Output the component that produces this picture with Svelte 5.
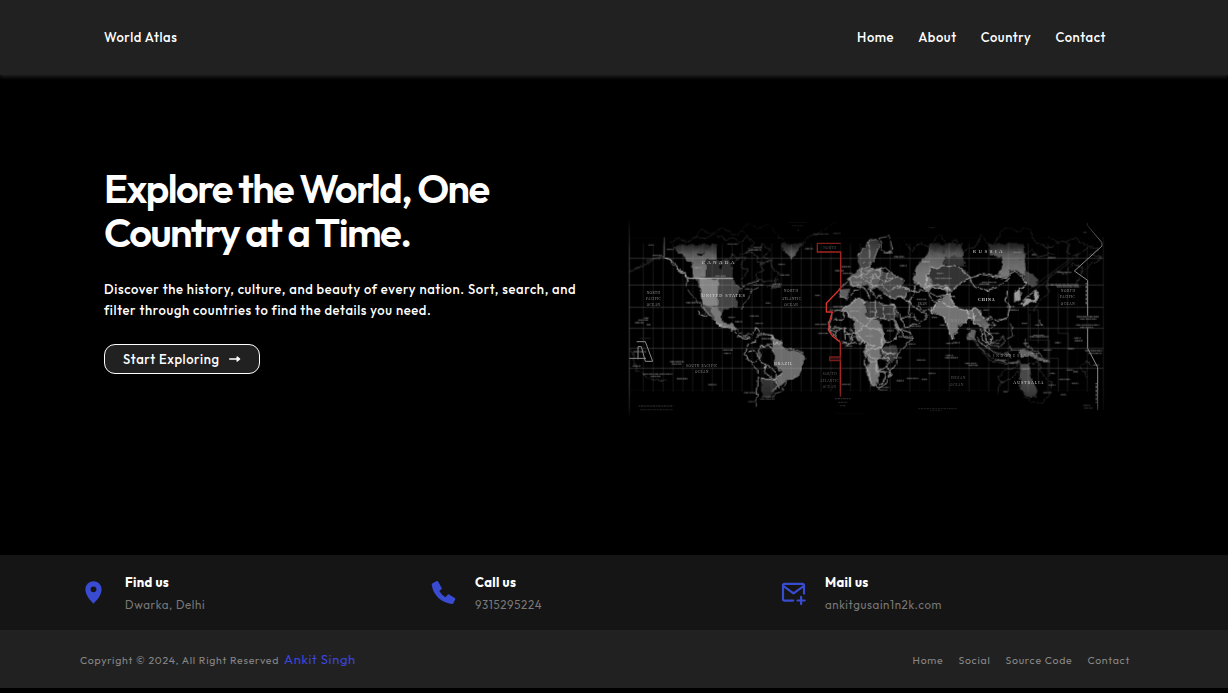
<script>
  const navLinks = ['Home', 'About', 'Country', 'Contact'];
  const footerLinks = ['Home', 'Social', 'Source Code', 'Contact'];
  const contacts = [
    { icon: 'pin', title: 'Find us', text: 'Dwarka, Delhi' },
    { icon: 'phone', title: 'Call us', text: '9315295224' },
    { icon: 'mail', title: 'Mail us', text: 'ankitgusain1n2k.com' }
  ];

  const meridians = Array.from({ length: 46 }, (_, i) => 70 + i * 29.6);
  const parallels = [85, 145, 225, 292, 355, 415, 475, 540];

  // Small place markers: x, y, width
  const marks = [
    [85,105,18],[98,136,26],[140,118,22],[222,173,22],[285,198,32],[322,102,34],[385,120,38],[400,112,24],
    [555,116,24],[580,72,45],[640,70,22],[475,163,20],[480,195,28],[458,222,26],[455,230,26],[400,225,30],
    [375,237,22],[437,279,14],[198,278,28],[45,338,26],[55,330,30],[80,344,12],[72,324,14],[40,425,38],
    [150,455,42],[155,462,30],[38,468,24],[68,492,90],[92,499,30],[170,506,34],[265,524,24],[310,420,28],
    [312,430,20],[372,548,40],[385,575,22],[425,560,36],[420,567,44],[665,400,30],[675,408,22],[665,523,26],
    [645,182,26],[665,170,26],[668,190,28],[585,343,36],[595,370,30],[628,300,32],[640,290,40],[325,322,20],
    [345,335,22],[350,380,38],[390,318,26],[405,340,24],[410,374,36],[425,386,34],[440,402,28],[585,256,16],
    [822,140,30],[840,167,20],[790,128,28],[798,205,24],[910,155,14],[866,243,24],[890,268,30],[862,322,26],
    [870,348,32],[750,305,22],[798,312,24],[800,362,22],[835,380,28],[865,402,22],[935,322,18],[960,345,22],
    [978,400,22],[999,398,20],[975,443,38],[978,436,22],[890,450,26],[925,490,22],[860,505,36],[905,508,18],
    [830,512,22],[785,430,30],[820,443,24],[780,485,24],[775,532,34],[778,540,24],[1035,460,36],[1045,466,28],
    [1040,357,12],[1040,388,26],[1085,217,44],[1078,222,30],[1100,345,30],[1105,370,32],[1110,400,28],
    [1135,328,20],[1160,290,24],[1165,300,20],[1205,340,18],[1245,345,24],[1230,380,56],[1240,376,34],
    [1305,398,18],[1345,416,18],[1210,400,14],[1285,143,22],[1312,187,42],[1290,225,86],[1310,230,70],
    [1370,320,66],[1380,327,50],[1368,345,70],[1380,352,40],[1362,384,20],[1364,392,24],[1395,422,52],
    [1405,430,40],[1290,490,16],[1286,525,20],[1318,508,34],[1322,554,18],[1340,480,20],[1355,520,20],
    [1360,485,14],[1390,586,22],[1392,594,26],[1270,548,24],[1150,545,14],[1180,127,24],[1235,134,12],
    [1390,67,10],[1420,465,18],[1175,420,34],[1230,430,30],[1270,420,24],[1270,455,20],[1175,300,22],
    [1090,300,18],[1052,330,30],[1170,460,24],[1125,450,36],[950,190,20],[945,205,50],[905,155,24],[690,303,26],
    [720,348,22],[735,378,24],[735,405,20],[700,380,22],[735,182,24],[765,180,24],[700,217,26],[1207,477,22]
  ];
</script>

<div class="page">
  <header>
    <span class="brand">World Atlas</span>
    <nav>
      {#each navLinks as link}<a href="#top">{link}</a>{/each}
    </nav>
  </header>

  <main>
    <section class="intro">
      <h1>Explore the World, One<br />Country at a Time.</h1>
      <p>Discover the history, culture, and beauty of every nation. Sort, search, and<br />filter through countries to find the details you need.</p>
      <button>
        <span>Start Exploring</span>
        <svg width="12" height="8" viewBox="0 0 12 8"><path d="M.7 4H10M8.2 2 10.6 4 8.2 6Z" fill="#fff" stroke="#fff" stroke-width="1.4" stroke-linejoin="round" stroke-linecap="round" /></svg>
      </button>
    </section>

    <svg class="map" width="490" height="210" viewBox="0 0 1470 630" role="img" aria-label="World map">
      <defs>
        <linearGradient id="fade" x1="0" y1="0" x2="0" y2="1">
          <stop offset=".03" stop-color="#000" /><stop offset=".12" stop-color="#999" />
          <stop offset=".2" stop-color="#fff" /><stop offset=".82" stop-color="#fff" />
          <stop offset=".94" stop-color="#888" /><stop offset=".99" stop-color="#000" />
        </linearGradient>
        <linearGradient id="land" gradientUnits="userSpaceOnUse" x1="0" y1="100" x2="0" y2="190">
          <stop offset="0" stop-color="#222" /><stop offset=".4" stop-color="#5c5c5c" /><stop offset="1" stop-color="#777" />
        </linearGradient>
        <filter id="rough" filterUnits="userSpaceOnUse" x="0" y="0" width="1470" height="630" color-interpolation-filters="sRGB">
          <feTurbulence type="fractalNoise" baseFrequency=".055" numOctaves="2" seed="4" />
          <feDisplacementMap in="SourceGraphic" scale="16" xChannelSelector="R" yChannelSelector="G" />
        </filter>
        <mask id="edges" maskUnits="userSpaceOnUse" x="0" y="0" width="1470" height="630"><rect width="1470" height="630" fill="url(#fade)" /></mask>
      </defs>
      <g mask="url(#edges)" fill="none" stroke-linejoin="round">
        <g filter="url(#rough)">
        <!-- Americas -->
        <path fill="url(#land)" d="M163 112 178 103H290V150H258V205H220L216 160 185 140Z" />
        <path fill="#303030" d="M258 150H322L340 170V205H258Z" />
        <path fill="#444" d="M225 205H340L347 222 362 236 350 262 356 290 335 296 310 300 300 315 300 334 338 342 350 362 312 350 290 340 272 318 245 285 240 240Z" />
        <path fill="#858585" d="M237 207H295L292 285 270 289 245 283Z" />
        <path fill="#777" d="M270 290 295 292 305 318 302 335 338 344 358 364 310 352 285 338Z" />
        <path fill="#6c6c6c" d="M460 390 485 395 495 415 525 425 550 434 554 448 542 475 530 500 500 512 480 530 465 505 485 490 462 460Z" />
        <path fill="#343434" d="M424 508 455 505 474 530 460 550 440 562 424 550Z" />
        <path fill="url(#land)" d="M480 100 550 100 535 120 515 147 500 130Z" />
        <g fill="#000" stroke="none"><ellipse cx="326" cy="316" rx="20" ry="21" /><path d="M230 134l24-9-8 13zM298 170l14-8-6 20z" /></g>

        <!-- Europe, Africa and Asia -->
        <path fill="#484848" d="M712 140 730 115 747 93 766 88 775 112 764 145 740 172 724 176Z" />
        <path fill="#606060" d="M682 205 722 174 770 174 792 186 780 212 770 232 755 240 740 222 718 230 690 225ZM658 238 690 236 682 266 658 262Z" />
        <path fill="#484848" d="M792 186 820 192 850 205 840 230 862 240 864 260 825 268 790 253 770 232 780 212Z" />
        <path fill="#747474" d="M664 298 715 264 736 270 738 320 782 333 784 360 800 395 782 415 786 440 770 455 778 480 770 530 752 528 740 490 746 455 732 422 740 400 712 390 700 365 705 335Z" />
        <path fill="#393939" d="M738 275 825 286 836 325 790 328 738 322ZM785 415 830 405 830 435 816 460 790 450Z" />
        <path fill="url(#land)" d="M890 170 925 125 930 102H1028V140H972V168L1000 170 1045 200 1020 225 990 242 940 235 922 244 876 210Z" />
        <path fill="#333" d="M972 140 1028 138 1036 170 1000 168 972 165Z" />
        <path fill="url(#land)" d="M1105 102H1210L1218 185 1216 208 1198 186 1170 180 1160 202 1130 198 1140 182 1150 165 1145 140 1110 136Z" />
        <path fill="#333" d="M935 175 970 168 1035 178 1048 205 1008 236 945 231 922 195Z" />
        <path fill="#737373" d="M935 305 960 272 985 252 998 270 1010 292 1048 300 1078 296 1074 326 1048 330 1015 348 996 382 974 320Z" />
        <path fill="#626262" d="M1060 300 1080 296 1085 320 1108 344 1100 360 1062 338Z" />
        <path fill="#999" d="M1184 248 1200 235 1202 270 1186 278ZM1206 282 1220 264 1240 268 1248 242 1256 244 1252 274 1228 282 1210 290Z" />
        <path fill="#444" d="M1210 180 1240 195 1256 210 1240 232 1215 225Z" />
        <path fill="#626262" d="M1198 420 1235 420 1252 438 1285 450 1270 455 1230 440 1202 444ZM1052 358 1066 360 1060 390 1038 382Z" />
        <path fill="#484848" d="M1200 462H1228L1234 500 1252 545 1246 562 1224 560 1200 542Z" />
        <path fill="#000" d="M765 242 790 255 780 262 770 258Z" />

        <!-- Faint coastlines -->
        <g stroke="#353535" stroke-width="2.6">
          <path d="M30 186 60 168 90 150 130 136M45 178l20-5 35-24 26-8M150 100l22-14 30 8 26-14 30 6 28-12 30 14 26-5 18 15 20-16 24 20-20 13 34 5 5-20 25 18-18 23 25 10-35 10 12 20-25 10 5 18 32 8 26-10 14 20-32 8M220 85l25-25 32 10 30-15 35 20 25-10 30 25M360 60l25-20 28 16 34-15 25 35 25 18 20 22 24-10 25-25 35-14 20-14 30-20M315 180l20-45 40 10-15 25 25 8-22 35 12 25M340 160l35-35 40 10-5 25 40-5 10 22 22 15-20 10 5 18-26 12" />
          <path d="M850 92l25 30 25-25 28 14 32-38 20 30-12 25 40-40 20 35 40-14 14-34 30 34 14-12 26-44 44 10 30-10 24 50 45 10 24-22 30 12-10 24 34 10 35-28 30 5-25 20 34 8-40 22-25 28-15 30 22-50-32-10-20 30-35-8-24 30 10 30-32 34-15 24M1285 80l35 20 45-15 30 20M1200 150l35-35 20 25 45-10M1145 520l-8-20 20-20 30-8 15-15M1228 465l25-10 14 40 28 25-8 35-22 25-30-5-24-18" />
          <path d="M1400 500l-20-30 20-18 20 20M1195 480l-20 24-35 14-4 32M1040 372l38 42 30 36 50 12M34 420 52 480 90 505 150 515" />
        </g>

        <!-- Country borders -->
        <g stroke="#aaa" stroke-width="2.6">
          <path stroke="#bbb" d="M135 142 150 148 165 160 172 175 190 188 204 206M132 140 150 153 170 176 192 194 206 212M232 302l12 15 15 5M248 288l40 52 48 20 20 20 32 6" />
          <path stroke="#777" d="M204 206 198 225 208 247 224 265 246 288 262 320M345 222l20 15 20-16 32-8M365 302l2-20 15-16 10-22 24-12M358 365l18 12 20-5" />
          <path stroke="#bbb" d="M398 372 410 352 422 370 452 372 462 392M424 508l40 0 10 18-20 18M386 400 376 430 386 450 410 475 414 520 408 596M386 400l22-4 8-24M386 425l20-4 12 22-14 16-20-6M418 410l32-4 12 18M418 410l2 42 14 8 4 34 26 12 2-24-44-28M465 505l20-13M480 530l-20-20M455 375l5 28 20-6" />
          <path stroke="#888" d="M462 392 480 394 492 410 550 430 554 446 532 498 502 510 486 545 466 550 460 562" />
          <path d="M712 138 730 115 747 93 768 88 778 110 764 145 742 172 724 174 722 195 690 205 682 216 658 236 660 264 684 266 700 248 722 230 738 240 748 256M720 195l22-2 10-18 22 6 22-8 22 20 34 18-14 22-36 8-16-18-25 5-25-18zM747 92l2 45-20 20M778 85l30-6 10 41-18 10-14-10z" />
          <path d="M688 205 700 230 722 225 742 238 758 232M718 180 745 208 768 192 790 218 820 202M756 188v34l22 10M782 174l-5 26-25 8M802 188l-7 35M790 252 825 264 860 258 866 238 844 230M748 238l22 24 6-10 12 12M735 242l18 26M820 236l18-12 30 12" />
          <path stroke="#b5b5b5" d="M738 275 712 266 664 298 640 310 628 340 628 360 645 382 664 394 698 402 730 396 745 420 732 450 745 480 754 522 776 534 800 520 808 490 830 460 832 430 878 384 850 382 838 358 824 326 824 286 738 275M664 298l72 50 30-28V270M736 348l-24 20-34 5-12-20h-30M736 348l50 15M738 325h52V288M790 328l30 0 16 30-8 28-28 12-14-32M790 370l-6 42-30 5M712 368l20 30 30 8M745 420l36-6 10-26M745 435l25 15 36-8M781 414l25 20 22-4M745 455h25v30h25l-4 30-15 10M770 450l-4 40M806 440l-8 30-26 15M798 470l18 14-8 18M786 445l18-15 20 4M645 382l10-25 18-4 3 38M676 354l18 42M692 354l3 42M650 365l-20-5M640 330h30V306M838 358l36 10 5 18" />
          <path d="M825 286 842 325 855 350 890 342 918 330 916 310 890 300 870 275 840 262M842 325l35-15 14 24M870 275l-5 35M840 262l30 13 10-30 40-5 15 30 18 8-18 25-30-5-12-15M880 245l-24-10-25-8M880 245l15-27 28 26 28 16 32-8-3-24-38-6-30 10" />
          <path stroke="#c5c5c5" d="M922 195 935 175 968 170 1004 168 1028 180 1048 205 1020 222 1005 236 990 246 992 265 1008 292 1044 300 1070 296 1084 318 1098 328 1110 322 1135 334 1162 322 1170 290 1158 270 1162 245M1048 205l40-12 72 12 12-20 20 3 28 30-5 12-22 5M1048 205l12 22 40 14 35-10 35-28M922 195l-6 32 32 7 44 2M935 305l18-32 30-22 22 12M953 273l42 18 15 1M974 320l-40-12 0-17M974 320l22 66 20-34 38-30M1044 300l4 26 22-6M1060 300l0 36 20 10 5 40 20 10-12-38 22 22-3 20-18 10-22-20M1184 240v40M1202 282l20-24 25-15" />
        </g>
        <g stroke="#7a7a7a" stroke-width="2.4"><path d="M1080 370l18-20 12 8-8 18zM1092 336l18-12 15 22-10 10M1110 365l-22-25M1070 380l25 30 36 20 36 6M1098 395l38-4 12-12 8 14-20 18-30-2M1165 402l10 15-14 12 16 16M1050 375l28 34 34 32 50 18 40-4M1220 386l-5 20M1260 330l8 22M1171 340l10 38-20 8M1215 406l35 18 35 30-34-4" /></g>
        </g>

        <!-- Graticule -->
        <path stroke="#c4c4c4" stroke-width="3" d="M205 205H340" /><path stroke="#686868" stroke-width="3" d="M133 82V142" />
        <g stroke="#bbb" stroke-width="2.4">
          {#each meridians as x, i}<path opacity={i < 23 ? 0.17 : i % 2 ? 0.2 : 0.05} d="M{x} 100V545" />{/each}
          {#each parallels as y}<path opacity={y < 100 || y > 500 ? 0.05 : 0.32} d="M28 {y}H1450" />{/each}
          <path opacity=".4" d="M28 30V615" /><path opacity=".2" d="M1450 80V600" />
        </g>
        <path stroke="#303030" stroke-width="2" d="M60 385h32M70 355v44M1285 355v90h30v100M1315 250v120h30v50M1230 310v80h58v110M1225 300h30v100M1180 415h75v100M1225 240 1360 140M1232 250 1375 135" />
        <g stroke="#aaa" stroke-width="4" stroke-dasharray="4 1 6 1 3 2" opacity=".55">
          {#each marks as [x, y, w]}<path d="M{x} {y}h{w}" />{/each}
        </g>

        <!-- Date lines -->
        <path stroke="#8a8a8a" stroke-width="3" d="M1402 38V46L1446 98V108L1363 183 1403 211V317M1403 355V415L1433 472V600M28 445H78M50 395H76L98 454H76L64 410H54V448" />
        <g stroke="#777" stroke-width="7" stroke-dasharray="2 2"><path d="M1400 220v65M1430 520v58" /><path d="M1285 224h92" opacity=".5" /></g>
        <path stroke="#d8322a" stroke-width="4" d="M662 235 619 280V306H637L627 340V363L638 379 661 397" />
        <path stroke="#a32620" stroke-width="4" d="M662 100H592V126H662V235M661 397V560" />
        <path stroke="#771c19" stroke-width="4" fill="#32100f" d="M629 441H661V452H629Z" />

        <g class="labels" stroke="none">
          <g fill="#d8d8d8">
            <text x="245" y="162" textLength="98" font-size="15">CANADA</text>
            <text x="245" y="261" textLength="130" font-size="13">UNITED STATES</text>
            <text x="462" y="466" textLength="55" font-size="13">BRAZIL</text>
            <text x="1058" y="129" textLength="90" font-size="15">RUSSIA</text>
            <text x="1074" y="274" textLength="50" font-size="12" font-weight="bold">CHINA</text>
            <text x="1180" y="523" textLength="90" font-size="12">AUSTRALIA</text>
            <text x="1120" y="440" textLength="98" font-size="11" opacity=".6">INDONESIA</text>
          </g>
          <g fill="#999" font-size="10">
            <text x="80" y="251" textLength="40">NORTH</text><text x="78" y="270" textLength="44">PACIFIC</text><text x="80" y="288" textLength="40">OCEAN</text>
            <text x="492" y="247" textLength="42">NORTH</text><text x="485" y="269" textLength="58">ATLANTIC</text><text x="493" y="288" textLength="40">OCEAN</text>
            <text x="198" y="470" textLength="94">SOUTH PACIFIC</text><text x="225" y="488" textLength="40">OCEAN</text>
            <text x="1323" y="247" textLength="42">NORTH</text><text x="1320" y="265" textLength="44">PACIFIC</text><text x="1322" y="285" textLength="42">OCEAN</text>
            <text x="985" y="335" textLength="44">INDIA</text><text x="895" y="284" textLength="25">IRAN</text>
          </g>
          <g fill="#666" font-size="10">
            <text x="608" y="494" textLength="42">SOUTH</text><text x="600" y="515" textLength="56">ATLANTIC</text><text x="608" y="534" textLength="40">OCEAN</text>
            <text x="992" y="507" textLength="44">INDIAN</text><text x="990" y="527" textLength="40">OCEAN</text>
            <text x="610" y="117" textLength="38">NORTH</text>
          </g>
        </g>
        <g stroke="#3c3c3c" stroke-width="4" stroke-dasharray="5 2 8 2"><path d="M56 588H160M60 599H158M506 37H560M516 47H548M532 60h4M895 596H1010M930 602H965M645 566H692M655 577H682M660 587H678M926 53H945" /><path d="M645 610H735" opacity=".5" /></g>
      </g>
    </svg>
  </main>

  <footer>
    <div class="contacts">
      {#each contacts as c}
        <div class="contact">
          {#if c.icon === 'pin'}
            <svg width="27" height="27" viewBox="0 0 24 24" fill="#394bd0"><path d="M12 2C7.58 2 4.8 5.3 4.8 9.3 4.8 14.3 9 18.8 12 22 15 18.8 19.2 14.3 19.2 9.3 19.2 5.3 16.42 2 12 2Zm0 4.6a2.6 2.6 0 1 1 0 5.2 2.6 2.6 0 0 1 0-5.2Z" /></svg>
          {:else if c.icon === 'phone'}
            <svg width="27" height="27" viewBox="0 0 27 27" fill="#394bd0"><path d="M2.2 4.4 6.7 2q.9-.4 1.4.5l3.5 6.2q.4.8-.2 1.5L9.3 12q2.3 4 6.2 6.2l2.4-2.6q.6-.5 1.2-.1l5.7 3.4q.9.5.5 1.3l-2 4.1q-.4.7-1.2.6C11.7 24.3 2.9 16 1.7 5.5q-.1-.8.5-1.1Z" /></svg>
          {:else}
            <svg width="27" height="27" viewBox="0 0 27 27" fill="none" stroke="#394bd0" stroke-width="2.2" stroke-linecap="round" stroke-linejoin="round"><path d="M13.2 21.6H4.6Q3 21.6 3 20V6.5Q3 4.9 4.6 4.9H22.4Q24 4.9 24 6.5V14.6M3.5 7.2 13.5 14.4 23.5 7.2M21.1 17.9V25.1M17.5 21.5H24.7" /></svg>
          {/if}
          <div class="detail"><h2>{c.title}</h2><p>{c.text}</p></div>
        </div>
      {/each}
    </div>
    <div class="legal">
      <p><span>Copyright © 2024, All Right Reserved</span><a class="author" href="#top">Ankit Singh</a></p>
      <ul>{#each footerLinks as link}<li>{link}</li>{/each}</ul>
    </div>
  </footer>
</div>

<style>
  :global(body) { margin: 0; background: #000; }
  * { box-sizing: border-box; }
  .page { height: 693px; background: #000; color: #fff; font-family: Outfit, Lato, sans-serif; overflow: hidden; }
  header { height: 75px; padding: 0 122px 1px 104px; display: flex; align-items: center; justify-content: space-between; background: #212121; box-shadow: 0 2px 4px #212121; font-size: 13px; font-weight: 500; }
  .brand, nav a { white-space: nowrap; letter-spacing: .58px; }
  nav { display: flex; gap: 24px; }
  a { color: inherit; text-decoration: none; }
  main { height: 480px; padding: 0 118px 0 104px; display: flex; justify-content: space-between; }
  .intro { width: 490px; padding-top: 91px; }
  h1, h2, p, ul { margin: 0; }
  h1 { font-size: 40px; line-height: 44px; font-weight: 600; letter-spacing: -1.57px; white-space: nowrap; }
  .intro p { margin-top: 25px; font-size: 13px; line-height: 21px; font-weight: 500; letter-spacing: .63px; white-space: nowrap; }
  button { margin-top: 23px; width: 156px; height: 30px; padding: 0 18px 1px; display: flex; align-items: center; justify-content: space-between; color: #fff; background: #212121; border: 1px solid #fff; border-radius: 11px; font: 500 13px Outfit, Lato, sans-serif; letter-spacing: .6px; white-space: nowrap; }
  .map { margin-top: 135px; flex: none; }
  .labels { font-family: "Liberation Serif", serif; }
  .contacts { height: 75px; padding: 0 80px; display: grid; grid-template-columns: 350px 350px 1fr; background: #151515; }
  .contact { display: flex; align-items: center; gap: 18px; }
  .detail { padding-top: 3px; }
  h2 { font-size: 13px; line-height: 22px; font-weight: 700; letter-spacing: .35px; white-space: nowrap; }
  .detail p { font-size: 11.5px; line-height: 24px; color: #787878; letter-spacing: .62px; white-space: nowrap; }
  .legal { height: 58px; padding: 2px 98px 0 80px; display: flex; align-items: center; justify-content: space-between; background: #212121; color: #878787; font-size: 10.5px; letter-spacing: .74px; white-space: nowrap; }
  .legal p { display: flex; align-items: baseline; gap: 5px; margin-top: -2px; }
  .author { font-size: 13px; letter-spacing: .65px; color: #3a45dc; }
  ul { display: flex; gap: 15px; padding: 0; list-style: none; }
</style>
